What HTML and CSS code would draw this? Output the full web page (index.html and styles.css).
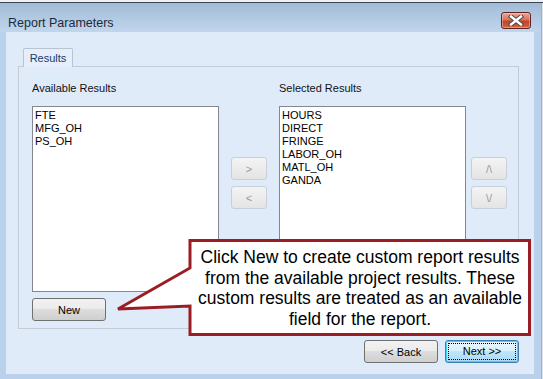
FILE: index.html
```html
<!DOCTYPE html>
<html lang="en">

<head>
    <meta charset="UTF-8">
    <meta name="viewport" content="width=device-width, initial-scale=1.0">
    <title>Report Parameters</title>
    <link rel="stylesheet" href="styles.css">
</head>

<body>
    <div class="strip"></div>

    <div class="window">
        <div class="titlebar">
            <span class="title">Report Parameters</span>
            <button class="close" title="Close">
                <svg width="16" height="11" viewBox="0 0 16 11">
                    <path d="M3 1.5 L13 9.5 M13 1.5 L3 9.5" stroke="#4a4a4a" stroke-width="4.4" stroke-linecap="square" fill="none"/>
                    <path d="M3 1.5 L13 9.5 M13 1.5 L3 9.5" stroke="#ffffff" stroke-width="2.4" stroke-linecap="square" fill="none"/>
                </svg>
            </button>
        </div>

        <div class="client">
            <div class="tabs">
                <span class="tab">Results</span>
            </div>

            <div class="panel">
                <div class="list-col">
                    <div class="label">Available Results</div>
                    <div class="listbox">
                        <div>FTE</div>
                        <div>MFG_OH</div>
                        <div>PS_OH</div>
                    </div>
                    <button class="btn new">New</button>
                </div>

                <div class="move-col">
                    <button class="small" disabled>&gt;</button>
                    <button class="small" disabled>&lt;</button>
                </div>

                <div class="list-col selected-col">
                    <div class="label">Selected Results</div>
                    <div class="listbox">
                        <div>HOURS</div>
                        <div>DIRECT</div>
                        <div>FRINGE</div>
                        <div>LABOR_OH</div>
                        <div>MATL_OH</div>
                        <div>GANDA</div>
                    </div>
                </div>

                <div class="move-col order-col">
                    <button class="small" disabled>/\</button>
                    <button class="small" disabled>\/</button>
                </div>
            </div>

            <div class="footer">
                <button class="btn">&lt;&lt; Back</button>
                <button class="btn default"><span class="focus">Next &gt;&gt;</span></button>
            </div>

            <!-- callout over the dialog -->
            <div class="callout">
                <svg class="callout-shape" width="418" height="100" viewBox="0 0 418 100">
                    <path d="M75 2.5 H414.5 V96.5 H75 V68 L3 71 L75 30 Z" fill="#ffffff" stroke="#9b1d24" stroke-width="3" stroke-linejoin="miter"/>
                </svg>
                <p class="callout-text">Click New to create custom report results from the available project results. These custom results are treated as an available field for the report.</p>
            </div>
        </div>
    </div>
</body>

</html>
```

FILE: styles.css
```css
body {
    margin: 0;
    width: 543px;
    height: 379px;
    overflow: hidden;
    background: #dce6f0;
    font-family: "Liberation Sans", Arial, sans-serif;
}

.strip {
    height: 2px;
    background: #eef1f5;
    border-bottom: 1px solid #3a4452;
}

.window {
    width: 541px;
    height: 376px;
    background: #b9d1ea;
    box-shadow: 1px 0 0 #4fd0f0;
}

.titlebar {
    height: 29px;
    display: flex;
    align-items: flex-start;
    justify-content: space-between;
    background: linear-gradient(#a2bbd6, #b4cbe4 60%, #c1d6ec);
}

.title {
    margin: 13px 0 0 8px;
    font-size: 12.5px;
    line-height: 14px;
    color: #1b2a3c;
}

.close {
    margin: 9px 10px 0 0;
    width: 30px;
    height: 17px;
    padding: 0;
    border: 1px solid #5e2424;
    border-radius: 3px;
    background: linear-gradient(#eaa896, #d7735e 45%, #c0412a 55%, #d2683f);
    box-shadow: inset 0 0 0 1px rgba(255, 210, 200, 0.45);
    display: flex;
    align-items: center;
    justify-content: center;
}

.client {
    position: relative;
    margin: 0 7px 0 6px;
    height: 342px;
    box-sizing: border-box;
    padding: 16px 0 0 12px;
    background: #e0ebfa;
    font-size: 11px;
}

.tabs {
    display: flex;
    padding-left: 5px;
}

.tab {
    position: relative;
    margin-bottom: -1px;
    width: 50px;
    height: 19px;
    box-sizing: border-box;
    border: 1px solid #b9c4d1;
    border-bottom: none;
    border-radius: 2px 2px 0 0;
    background: #e5eefa;
    color: #1a3a6a;
    line-height: 19px;
    text-align: center;
}

.panel {
    width: 501px;
    height: 263px;
    box-sizing: border-box;
    border: 1px solid #c4cbd5;
    padding: 15px 0 0 13px;
    display: flex;
    align-items: flex-start;
}

.list-col {
    width: 187px;
    display: flex;
    flex-direction: column;
}

.selected-col {
    margin-left: 12px;
}

.label {
    height: 13px;
    line-height: 13px;
    margin-bottom: 11px;
    color: #111;
}

.listbox {
    height: 186px;
    box-sizing: border-box;
    border: 1px solid #828790;
    background: #fff;
    padding: 2px 2px;
    line-height: 13px;
    color: #000;
}

.move-col {
    margin-left: 12px;
    padding-top: 75px;
    display: flex;
    flex-direction: column;
    gap: 6px;
}

.order-col {
    margin-left: 5px;
}

.small {
    width: 36px;
    height: 23px;
    padding: 0;
    border: 1px solid #c6cfdb;
    border-radius: 3px;
    background: linear-gradient(#f4f4f4, #ececec 50%, #e4e4e4);
    font-family: "Liberation Sans", Arial, sans-serif;
    font-size: 11px;
    color: #9a9a9a;
}

.btn {
    width: 74px;
    height: 23px;
    padding: 0;
    border: 1px solid #707070;
    border-radius: 3px;
    background: linear-gradient(#f2f2f2, #ebebeb 50%, #dddddd 50%, #cfcfcf);
    font-family: "Liberation Sans", Arial, sans-serif;
    font-size: 11px;
    color: #000;
}

.new {
    margin-top: 6px;
}

.footer {
    width: 501px;
    margin-top: 11px;
    display: flex;
    justify-content: flex-end;
    gap: 7px;
}

.default {
    border-color: #3c7fb1;
    background: linear-gradient(#eaf6fd, #d9f0fc 50%, #bee6fd 50%, #a7d9f5);
    box-shadow: inset 0 0 0 1px #48d0f4;
    display: flex;
    align-items: center;
    justify-content: center;
}

.focus {
    width: 68px;
    height: 17px;
    box-sizing: border-box;
    border: 1px dotted #000;
    line-height: 15px;
}

.callout {
    position: absolute;
    left: 109px;
    top: 206px;
    width: 418px;
    height: 100px;
}

.callout-shape {
    position: absolute;
    left: 0;
    top: 0;
}

.callout-text {
    position: relative;
    margin: 9px 0 0 76px;
    width: 338px;
    font-size: 17.5px;
    line-height: 20.5px;
    text-align: center;
    color: #000;
}
```
